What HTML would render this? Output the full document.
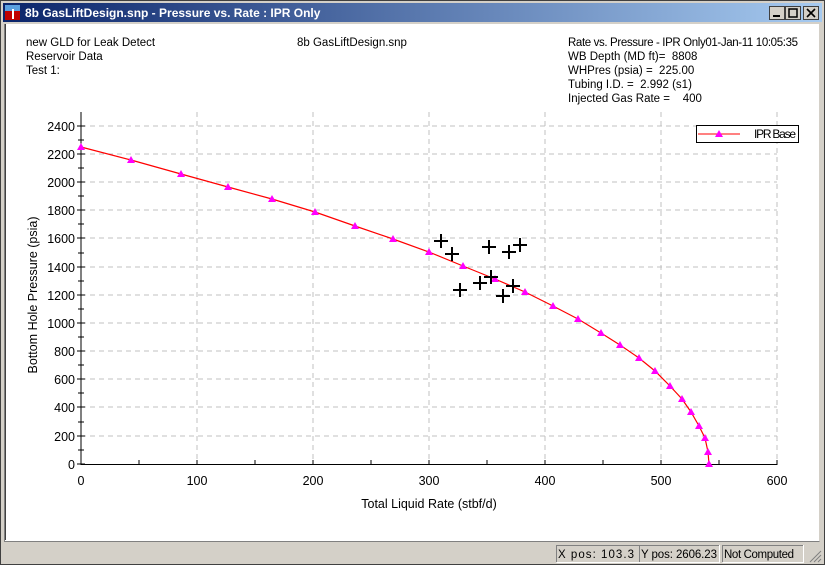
<!DOCTYPE html>
<html><head><meta charset="utf-8"><style>
body{margin:0;width:825px;height:565px;overflow:hidden;background:#d4d0c8;font-family:"Liberation Sans",sans-serif}
svg{display:block}
text{white-space:pre}
</style></head><body>
<svg width="825" height="565" xmlns="http://www.w3.org/2000/svg" font-family="Liberation Sans, sans-serif" xml:space="preserve">
<defs><linearGradient id="tb" x1="0" x2="1"><stop offset="0" stop-color="#0a246a"/><stop offset="1" stop-color="#a6caf0"/></linearGradient></defs>
<rect x="0" y="0" width="825" height="565" fill="#d4d0c8"/>
<rect x="0.5" y="0.5" width="824" height="564" fill="none" stroke="#404040"/>
<rect x="3" y="3" width="819" height="19" fill="url(#tb)"/>
<rect x="5" y="5" width="15" height="15" fill="#c00000"/><rect x="5" y="5" width="15" height="6" fill="#5aa0e0"/><rect x="12" y="9" width="2" height="10" fill="#fff"/>
<text x="25" y="17" font-size="12" font-weight="bold" fill="#fff">8b GasLiftDesign.snp - Pressure vs. Rate : IPR Only</text>
<g fill="#d4d0c8" stroke="#404040"><rect x="769.5" y="6.5" width="15" height="13"/><rect x="785.5" y="6.5" width="15" height="13"/><rect x="803.5" y="6.5" width="15" height="13"/></g>
<rect x="773" y="15" width="7" height="2" fill="#000"/><rect x="789" y="9" width="8" height="8" fill="none" stroke="#000" stroke-width="1.5"/>
<path d="M807 9l8 8M815 9l-8 8" stroke="#000" stroke-width="1.6"/>
<rect x="5" y="24" width="814" height="517" fill="#fff"/>
<path d="M4.5 24V541.5H819.5" fill="none" stroke="#808080"/>
<path d="M5.5 24V540" stroke="#404040"/>
<g font-size="11.5" fill="#000">
<text x="26" y="46">new GLD for Leak Detect</text><text x="26" y="60">Reservoir Data</text><text x="26" y="74">Test 1:</text>
<text x="297" y="46">8b GasLiftDesign.snp</text>
<text x="568" y="46" textLength="230">Rate vs. Pressure - IPR Only01-Jan-11 10:05:35</text>
<text x="568" y="60">WB Depth (MD ft)=  8808</text>
<text x="568" y="74">WHPres (psia) =  225.00</text>
<text x="568" y="88">Tubing I.D. =  2.992 (s1)</text>
<text x="568" y="102">Injected Gas Rate =    400</text>
</g>
<g stroke="#c0c0c0" stroke-dasharray="5,4" fill="none">
<path d="M81 126H777M81 154H777M81 182H777M81 210H777M81 238H777M81 267H777M81 295H777M81 323H777M81 351H777M81 379H777M81 407H777M81 436H777"/>
<path d="M197 112V464M313 112V464M429 112V464M545 112V464M661 112V464M777 112V464"/>
</g>
<g stroke="#000" fill="none">
<path d="M81 112V464.5H777"/>
<path d="M77 126H85M78 140H84M77 154H85M78 168H84M77 182H85M78 196H84M77 210H85M78 224H84M77 238H85M78 253H84M77 267H85M78 281H84M77 295H85M78 309H84M77 323H85M78 337H84M77 351H85M78 365H84M77 379H85M78 393H84M77 407H85M78 422H84M77 436H85M78 450H84M77 464H85"/>
<path d="M139 460V465M197 460V465M255 460V465M313 460V465M371 460V465M429 460V465M487 460V465M545 460V465M603 460V465M661 460V465M719 460V465M777 460V465"/>
</g>
<g font-size="12.5" fill="#000" text-anchor="end">
<text x="75" y="131">2400</text><text x="75" y="159">2200</text><text x="75" y="187">2000</text><text x="75" y="215">1800</text><text x="75" y="243">1600</text><text x="75" y="272">1400</text><text x="75" y="300">1200</text><text x="75" y="328">1000</text><text x="75" y="356">800</text><text x="75" y="384">600</text><text x="75" y="412">400</text><text x="75" y="441">200</text><text x="75" y="469">0</text>
</g>
<g font-size="12.5" fill="#000" text-anchor="middle">
<text x="81" y="485">0</text><text x="197" y="485">100</text><text x="313" y="485">200</text><text x="429" y="485">300</text><text x="545" y="485">400</text><text x="661" y="485">500</text><text x="777" y="485">600</text>
<text x="429" y="508">Total Liquid Rate (stbf/d)</text>
<text transform="translate(37 295) rotate(-90)">Bottom Hole Pressure (psia)</text>
</g>
<polyline fill="none" stroke="#f00" stroke-width="1.2" points="81,147 131,160 181,174 228,187 272,199 315,212 355,226 393,239 429,252 463,266 495,279 525,292 553,306 578,319 601,333 620,345 639,358 655,371 670,386 682,399 691,412 699,426 705,438 708,452 709,464"/>
<g fill="#f0f">
<path d="M0 -4L4 3H-4Z" transform="translate(81 147)"/>
<path d="M0 -4L4 3H-4Z" transform="translate(131 160)"/><path d="M0 -4L4 3H-4Z" transform="translate(181 174)"/><path d="M0 -4L4 3H-4Z" transform="translate(228 187)"/><path d="M0 -4L4 3H-4Z" transform="translate(272 199)"/><path d="M0 -4L4 3H-4Z" transform="translate(315 212)"/><path d="M0 -4L4 3H-4Z" transform="translate(355 226)"/><path d="M0 -4L4 3H-4Z" transform="translate(393 239)"/><path d="M0 -4L4 3H-4Z" transform="translate(429 252)"/><path d="M0 -4L4 3H-4Z" transform="translate(463 266)"/><path d="M0 -4L4 3H-4Z" transform="translate(495 279)"/><path d="M0 -4L4 3H-4Z" transform="translate(525 292)"/><path d="M0 -4L4 3H-4Z" transform="translate(553 306)"/><path d="M0 -4L4 3H-4Z" transform="translate(578 319)"/><path d="M0 -4L4 3H-4Z" transform="translate(601 333)"/><path d="M0 -4L4 3H-4Z" transform="translate(620 345)"/><path d="M0 -4L4 3H-4Z" transform="translate(639 358)"/><path d="M0 -4L4 3H-4Z" transform="translate(655 371)"/><path d="M0 -4L4 3H-4Z" transform="translate(670 386)"/><path d="M0 -4L4 3H-4Z" transform="translate(682 399)"/><path d="M0 -4L4 3H-4Z" transform="translate(691 412)"/><path d="M0 -4L4 3H-4Z" transform="translate(699 426)"/><path d="M0 -4L4 3H-4Z" transform="translate(705 438)"/><path d="M0 -4L4 3H-4Z" transform="translate(708 452)"/><path d="M0 -4L4 3H-4Z" transform="translate(709 464)"/>
</g>
<g stroke="#000" stroke-width="2">
<path d="M434 241h14M441 234v14"/><path d="M445 254h14M452 247v14"/><path d="M453 290h14M460 283v14"/><path d="M473 283h14M480 276v14"/><path d="M482 247h14M489 240v14"/><path d="M484 277h14M491 270v14"/><path d="M496 296h14M503 289v14"/><path d="M502 252h14M509 245v14"/><path d="M506 286h14M513 279v14"/><path d="M513 245h14M520 238v14"/>
</g>
<rect x="696.5" y="125.5" width="102" height="17" fill="#fff" stroke="#000"/>
<path d="M698 134H740" stroke="#f00"/><path d="M0 -4L4 3H-4Z" fill="#f0f" transform="translate(719 134)"/>
<text x="754" y="138" font-size="12" textLength="42">IPR Base</text>
<g fill="none"><path d="M556.5 562V545.5H719" stroke="#808080"/><path d="M556.5 562.5H719.5V545" stroke="#fff"/>
<path d="M639.5 562V545.5H719" stroke="#808080"/>
<path d="M722.5 562V545.5H803" stroke="#808080"/><path d="M722.5 562.5H803.5V545" stroke="#fff"/></g>
<g font-size="11.5" fill="#000"><text x="558" y="558" textLength="76">X pos: 103.3</text><text x="641" y="558" textLength="76">Y pos: 2606.23</text><text x="724" y="558" textLength="70">Not Computed</text></g>
<path d="M810 562L821 551M814 562L821 555M818 562L821 559" stroke="#808080"/>
</svg>
</body></html>
